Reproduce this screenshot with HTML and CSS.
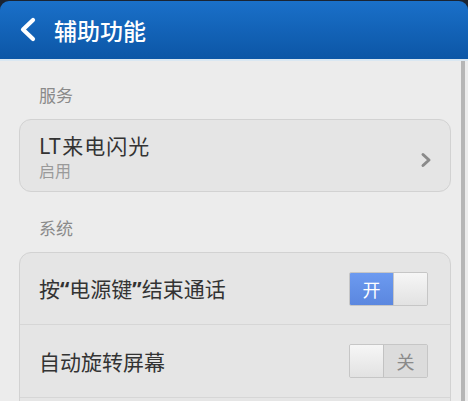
FILE: index.html
```html
<!DOCTYPE html>
<html lang="zh-CN">
<head>
<meta charset="utf-8">
<title>辅助功能</title>
<link rel="stylesheet" href="styles.css">
</head>
<body>
<div class="screen">
  <div class="bar-wrap">
    <header class="bar">
      <svg class="back" width="20" height="30" viewBox="0 0 20 30" aria-hidden="true">
        <polyline points="14,4 4,13.5 14,23" fill="none" stroke="#fff" stroke-width="4.2" stroke-linecap="round" stroke-linejoin="round"/>
      </svg>
      <h1 class="title">辅助功能</h1>
    </header>
  </div>
  <main class="content">
    <div class="section-label">服务</div>
    <div class="card">
      <div class="row row-two">
        <div class="texts">
          <div class="row-title">LT来电闪光</div>
          <div class="row-sub">启用</div>
        </div>
        <svg class="chev" width="12" height="16" viewBox="0 0 12 16" aria-hidden="true">
          <polyline points="3,2.5 9,8 3,13.5" fill="none" stroke="#8a8a8a" stroke-width="3" stroke-linecap="round" stroke-linejoin="round"/>
        </svg>
      </div>
    </div>
    <div class="section-label">系统</div>
    <div class="card">
      <div class="row">
        <div class="row-title">按<span class="q">“</span>电源键<span class="q">”</span>结束通话</div>
        <div class="toggle on"><span class="tlabel">开</span><span class="knob"></span></div>
      </div>
      <div class="row">
        <div class="row-title">自动旋转屏幕</div>
        <div class="toggle off"><span class="knob"></span><span class="tlabel">关</span></div>
      </div>
      <div class="row"></div>
    </div>
  </main>
  <div class="scrollbar"></div>
</div>
</body>
</html>
```

FILE: styles.css
```css
html, body {
  margin: 0;
  padding: 0;
  background: #ececec;
}
body {
  font-family: "Noto Sans CJK SC", "Noto Sans", sans-serif;
  width: 468px;
  height: 401px;
  overflow: hidden;
}
.screen {
  position: relative;
  height: 401px;
  overflow: hidden;
}
.bar-wrap {
  background: #1a2433;
  padding-top: 1px;
}
.bar {
  height: 58px;
  border-radius: 9px 9px 0 0;
  background: linear-gradient(#1a70c9, #0c56a6);
  border-bottom: 2px solid #d9e7f2;
  display: flex;
  align-items: center;
  padding-left: 19px;
}
.back {
  display: block;
  margin-top: 1px;
}
.title {
  margin: 0 0 0 15px;
  font-size: 23px;
  font-weight: 500;
  color: #fff;
  line-height: 30px;
}
.content {
  padding: 0 17px 0 19px;
}
.section-label {
  padding: 24px 0 14px 20px;
  font-size: 17px;
  line-height: 20px;
  color: #8a8a8a;
}
.card {
  background: #e5e5e5;
  border: 1px solid #d2d2d2;
  border-radius: 12px;
  margin-bottom: 2px;
}
.row {
  height: 72px;
  display: flex;
  align-items: center;
  justify-content: space-between;
  padding: 0 22px 0 19px;
  border-top: 1px solid #d6d6d6;
}
.row:first-child {
  border-top: none;
  height: 71px;
}
.row-two {
  height: 70px;
}
.texts {
  display: flex;
  flex-direction: column;
}
.row-title {
  font-size: 21px;
  line-height: 26px;
  color: #333;
}
.q {
  font-family: "Noto Sans", "DejaVu Sans", sans-serif;
  font-weight: 700;
}
.row-two .row-title {
  letter-spacing: 1px;
}
.row-sub {
  margin-top: 2px;
  font-size: 16px;
  line-height: 20px;
  color: #9a9a9a;
}
.chev {
  display: block;
  margin-right: -4px;
  margin-top: 8px;
}
.toggle {
  width: 77px;
  height: 32px;
  border: 1px solid #c6c6c6;
  border-radius: 2px;
  display: flex;
  overflow: hidden;
}
.toggle .tlabel {
  display: flex;
  align-items: center;
  justify-content: center;
  font-size: 18px;
}
.toggle.on .tlabel {
  width: 43px;
  background: linear-gradient(#6c9af0, #5b87df);
  color: #fff;
}
.toggle.off .tlabel {
  flex: 1;
  background: #dcdcdc;
  color: #8a8a8a;
}
.knob {
  background: linear-gradient(#f6f6f6, #e2e2e2);
}
.toggle.on .knob {
  flex: 1;
  border-left: 1px solid #c6c6c6;
}
.toggle.off .knob {
  width: 33px;
  border-right: 1px solid #c2c2c2;
}
.scrollbar {
  position: absolute;
  left: 461px;
  top: 61px;
  width: 4px;
  height: 340px;
  background: #b6b6b6;
}
```
